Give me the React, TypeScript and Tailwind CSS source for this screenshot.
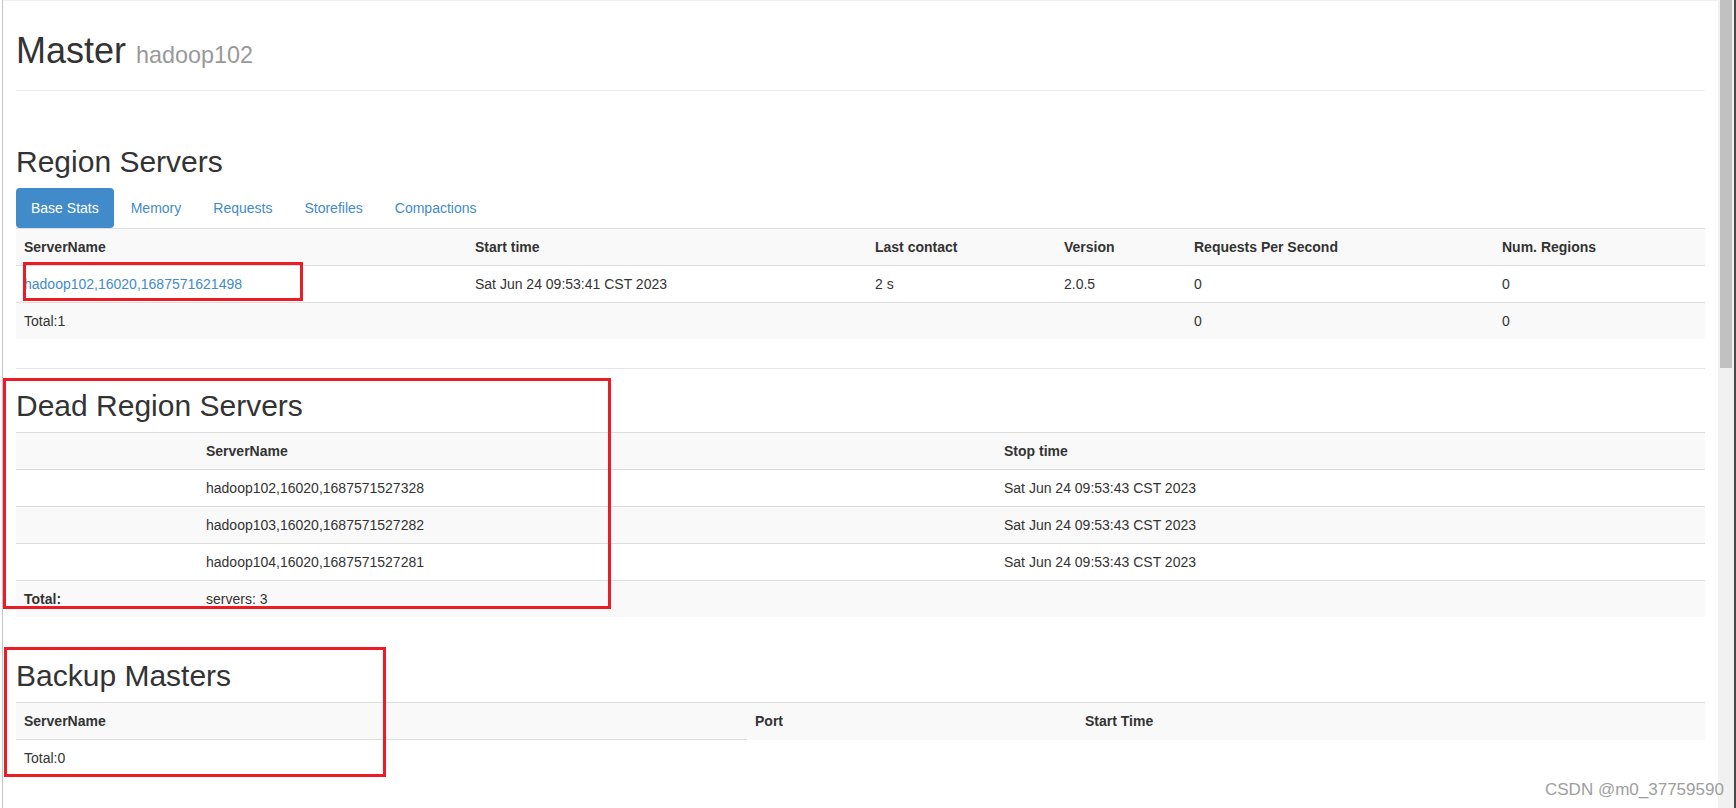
import React from "react";

const th = "border-t border-[#ddd] p-[8px] text-left font-bold align-top";
const td = "border-t border-[#ddd] p-[8px] text-left font-normal align-top";

export default function App() {
  return (
    <div className="relative flex h-[808px] w-[1736px] overflow-hidden bg-white font-['Liberation_Sans',Arial,sans-serif] text-[14px] leading-[20px] text-[#333]">
      <div className="w-[3px] shrink-0 border-r border-[#c4c4c4]" />
      <main className="min-w-0 flex-1 border-t border-[#efefef] px-[13px]">
        <div className="mt-[30px] border-b border-[#eee] pb-[19px]">
          <h1 className="m-0 text-[36px] font-normal leading-[40px]">
            Master <small className="text-[65%] font-normal leading-none text-[#999]">hadoop102</small>
          </h1>
        </div>

        <h2 className="mt-[54px] text-[30px] font-normal leading-[33px]">Region Servers</h2>
        <ul className="mt-[10px] flex gap-[2px]">
          <li className="rounded-[4px] bg-[#428bca] px-[15px] py-[10px] text-white">Base Stats</li>
          <li className="px-[15px] py-[10px] text-[#428bca]">Memory</li>
          <li className="px-[15px] py-[10px] text-[#428bca]">Requests</li>
          <li className="px-[15px] py-[10px] text-[#428bca]">Storefiles</li>
          <li className="px-[15px] py-[10px] text-[#428bca]">Compactions</li>
        </ul>
        <table className="w-full table-fixed border-collapse">
          <tbody>
            <tr className="bg-[#f9f9f9]">
              <th className={`${th} w-[451px]`}>ServerName</th>
              <th className={`${th} w-[400px]`}>Start time</th>
              <th className={`${th} w-[189px]`}>Last contact</th>
              <th className={`${th} w-[130px]`}>Version</th>
              <th className={`${th} w-[308px]`}>Requests Per Second</th>
              <th className={th}>Num. Regions</th>
            </tr>
            <tr>
              <td className={td}>
                <span className="text-[#428bca]">hadoop102,16020,1687571621498</span>
              </td>
              <td className={td}>Sat Jun 24 09:53:41 CST 2023</td>
              <td className={td}>2 s</td>
              <td className={td}>2.0.5</td>
              <td className={td}>0</td>
              <td className={td}>0</td>
            </tr>
            <tr className="bg-[#f9f9f9]">
              <td className={td}>Total:1</td>
              <td className={td}></td>
              <td className={td}></td>
              <td className={td}></td>
              <td className={td}>0</td>
              <td className={td}>0</td>
            </tr>
          </tbody>
        </table>

        <div className="mt-[29px] border-t border-[#e6e6e6]" />

        <h2 className="mt-[20px] text-[30px] font-normal leading-[33px]">Dead Region Servers</h2>
        <table className="mt-[10px] w-full table-fixed border-collapse">
          <tbody>
            <tr className="bg-[#f9f9f9]">
              <th className={`${th} w-[182px]`}></th>
              <th className={`${th} w-[798px]`}>ServerName</th>
              <th className={th}>Stop time</th>
            </tr>
            <tr>
              <td className={td}></td>
              <td className={td}>hadoop102,16020,1687571527328</td>
              <td className={td}>Sat Jun 24 09:53:43 CST 2023</td>
            </tr>
            <tr className="bg-[#f9f9f9]">
              <td className={td}></td>
              <td className={td}>hadoop103,16020,1687571527282</td>
              <td className={td}>Sat Jun 24 09:53:43 CST 2023</td>
            </tr>
            <tr>
              <td className={td}></td>
              <td className={td}>hadoop104,16020,1687571527281</td>
              <td className={td}>Sat Jun 24 09:53:43 CST 2023</td>
            </tr>
            <tr className="bg-[#f9f9f9]">
              <th className={th}>Total:</th>
              <td className={td}>servers: 3</td>
              <td className={td}></td>
            </tr>
          </tbody>
        </table>

        <h2 className="mt-[42px] text-[30px] font-normal leading-[33px]">Backup Masters</h2>
        <table className="mt-[10px] w-full table-fixed border-collapse">
          <tbody>
            <tr className="bg-[#f9f9f9]">
              <th className={`${th} w-[731px]`}>ServerName</th>
              <th className={`${th} w-[330px]`}>Port</th>
              <th className={th}>Start Time</th>
            </tr>
            <tr>
              <td className={td}>Total:0</td>
            </tr>
          </tbody>
        </table>
      </main>
      <div className="w-[16px] shrink-0 bg-[#f1f1f1]">
        <div className="ml-[2px] h-[368px] w-[12px] bg-[#c1c1c1]" />
      </div>
      <div className="w-[2px] shrink-0 bg-[#4a4a4a]" />

      {/* annotation boxes */}
      <div className="pointer-events-none absolute left-[23px] top-[262px] h-[39px] w-[280px] border-[3px] border-[#ed1c24]" />
      <div className="pointer-events-none absolute left-[3px] top-[378px] h-[231px] w-[608px] border-[3px] border-[#ed1c24]" />
      <div className="pointer-events-none absolute left-[4px] top-[647px] h-[130px] w-[382px] border-[3px] border-[#ed1c24]" />

      <div className="pointer-events-none absolute left-[1545px] top-[780px] whitespace-nowrap text-[17px] leading-[20px] text-[#9e9e9e]">
        CSDN @m0_37759590
      </div>
    </div>
  );
}
